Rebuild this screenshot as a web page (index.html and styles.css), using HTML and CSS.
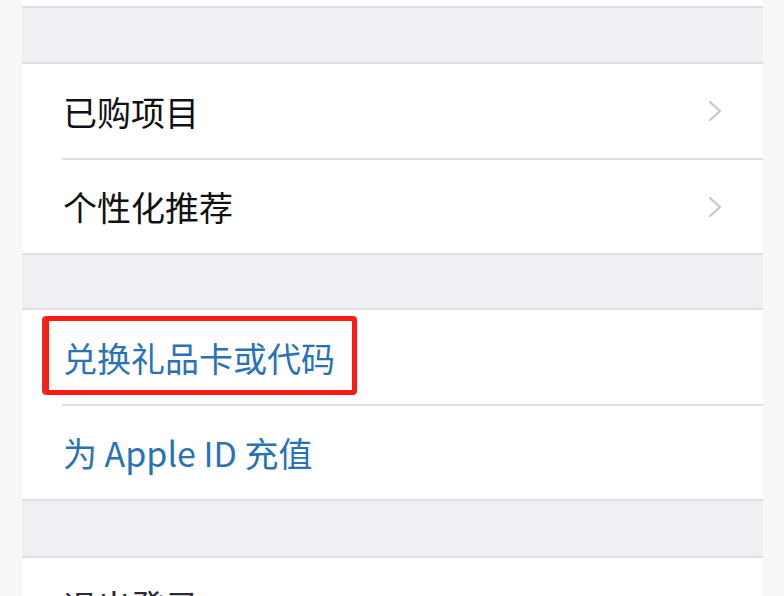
FILE: index.html
```html
<!DOCTYPE html>
<html lang="zh-CN">
<head>
<meta charset="utf-8">
<link rel="stylesheet" href="styles.css">
</head>
<body>
<div class="screen">
  <div class="top-cap"></div>
  <div class="gap"></div>
  <div class="group">
    <div class="row">
      <span class="label">已购项目</span>
      <svg class="chev" viewBox="0 0 14 22" width="14" height="22"><path d="M2 2 L12 11 L2 20" fill="none" stroke="#c7c7cc" stroke-width="2.2" stroke-linecap="round" stroke-linejoin="round"/></svg>
    </div>
    <div class="sep"></div>
    <div class="row short">
      <span class="label">个性化推荐</span>
      <svg class="chev" viewBox="0 0 14 22" width="14" height="22"><path d="M2 2 L12 11 L2 20" fill="none" stroke="#c7c7cc" stroke-width="2.2" stroke-linecap="round" stroke-linejoin="round"/></svg>
    </div>
  </div>
  <div class="gap g2"></div>
  <div class="group">
    <div class="row marked">
      <span class="label link">兑换礼品卡或代码</span>
      <div class="highlight"></div>
    </div>
    <div class="sep"></div>
    <div class="row short">
      <span class="label link">为 Apple ID 充值</span>
    </div>
  </div>
  <div class="gap g3"></div>
  <div class="group">
    <div class="row">
      <span class="label dim">退出登录</span>
    </div>
  </div>
</div>
</body>
</html>
```
FILE: styles.css
```css
html, body {
  margin: 0;
  padding: 0;
}
body {
  background: #f7f7f7;
  font-family: "Noto Sans CJK SC", "Noto Sans", sans-serif;
  overflow: hidden;
  height: 596px;
}
.screen {
  margin: 0 21px 0 22px;
  background: #efeff4;
  height: 596px;
}
.top-cap {
  height: 6px;
  background: #fff;
  border-bottom: 2px solid #e0e0e4;
}
.gap {
  height: 54px;
}
.gap.g2 { height: 53px; }
.gap.g3 { height: 55px; }
.group {
  background: #fff;
  border-top: 2px solid #e0e0e4;
  border-bottom: 2px solid #e0e0e4;
}
.row {
  height: 94px;
  display: flex;
  align-items: center;
  justify-content: space-between;
  padding: 0 41px 0 41px;
  position: relative;
}
.row.short { height: 93px; }
.label {
  font-size: 34px;
  color: #111;
  line-height: 1;
  padding-top: 1px;
}
.label.link {
  color: #2a72b8;
}
.label.dim {
  color: #2a2a35;
}
.sep {
  height: 2px;
  margin-left: 40px;
  background: #e0e0e4;
}
.chev {
  display: block;
}
.highlight {
  position: absolute;
  left: 22px;
  top: 6px;
  width: 303px;
  height: 69px;
  border: 5px solid #ff1a12;
  border-radius: 4px;
  box-shadow: -2px 0 0 #c83a3a;
}
```
